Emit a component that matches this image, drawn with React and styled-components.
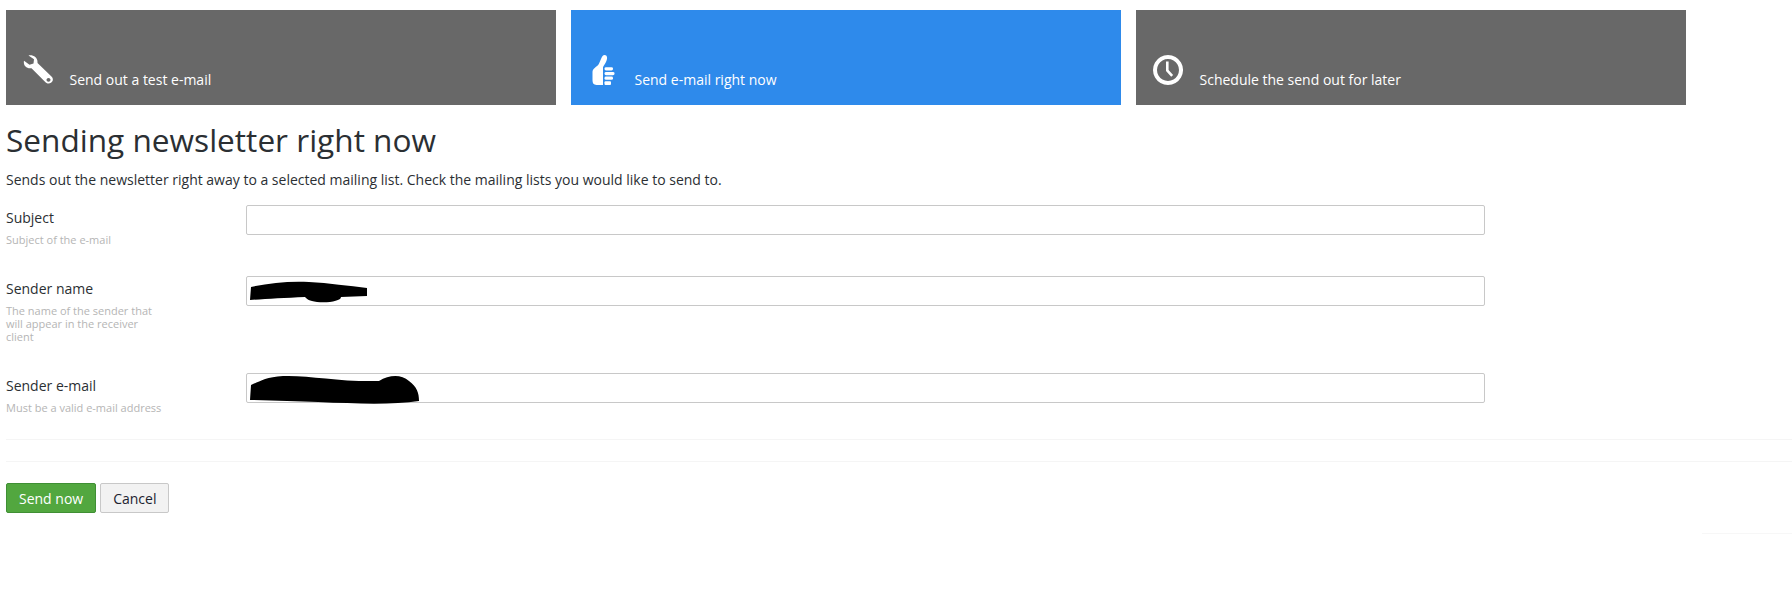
import React from 'react'
import styled, { createGlobalStyle } from 'styled-components'

const GlobalStyle = createGlobalStyle`
    html, body {
        margin: 0;
        background: #fff;
        font-family: 'Open Sans', sans-serif;
        font-size: 14px;
        color: #2b2f33;
    }
`

const Page = styled.div`
    position: relative;
    height: 591px;
    padding: 10px 0 0 6px;
    box-sizing: border-box;
    overflow: hidden;
`

const Tiles = styled.div`
    display: flex;
    gap: 15px;
`

const Tile = styled.a`
    width: 550px;
    height: 95px;
    box-sizing: border-box;
    padding: 0 0 16px 17px;
    display: flex;
    align-items: flex-end;
    background: ${p => (p.$active ? '#2e8aeb' : '#686868')};
    color: #fff;
    font-size: 14px;
    line-height: 19px;
`

const TileIcon = styled.svg`
    width: 30px;
    height: 30px;
    margin: 0 16.5px 4px 0;
    flex: none;
    fill: #fff;
`

const Title = styled.h1`
    margin: 13px 0 0;
    font-size: 31.6px;
    font-weight: 400;
    line-height: 44px;
    color: #2b2f33;
`

const Intro = styled.p`
    margin: 8px 0 0;
    line-height: 19px;
`

const Form = styled.div`
    margin-top: 16px;
`

const Row = styled.div`
    display: grid;
    grid-template-columns: 240px 1239px;
    min-height: ${p => p.$height}px;
`

const Label = styled.div`
    padding-top: 3px;
    line-height: 19px;
    color: #2b2f33;
`

const Help = styled.div`
    width: 158px;
    margin-top: 6px;
    font-size: 11px;
    line-height: 13px;
    color: #b5b5b5;
`

const Field = styled.div`
    position: relative;
`

const Input = styled.input`
    display: block;
    width: 100%;
    height: 30px;
    box-sizing: border-box;
    border: 1px solid #c8c8c8;
    border-radius: 2px;
    background: #fff;
    outline: none;
`

const Scribble = styled.svg`
    position: absolute;
    left: 3px;
    top: 2px;
    height: 32px;
    width: ${p => p.$width}px;
    fill: #000;
`

const Divider = styled.hr`
    margin: 0 0 21px;
    border: 0;
    border-top: 1px solid #f5f5f5;
`

const Buttons = styled.div`
    display: flex;
    gap: 4px;
    margin-top: 21px;
`

const Button = styled.button`
    height: 30px;
    box-sizing: border-box;
    padding: 0 12px;
    border: 1px solid ${p => (p.$primary ? '#3f8f34' : '#c8c8c8')};
    border-radius: 2px;
    background: ${p => (p.$primary ? '#52a73f' : '#f2f2f2')};
    color: ${p => (p.$primary ? '#fff' : '#1c2330')};
    font-family: 'Open Sans', sans-serif;
    font-size: 14px;
`

const StrayLine = styled.div`
    position: absolute;
    right: 0;
    top: 533px;
    width: 90px;
    border-top: 1px solid #f7f7f7;
`

const Wrench = () => (
    <TileIcon viewBox="0 0 30 32" preserveAspectRatio="none">
        <path d="M1 6 L6.5 10.5 L10.5 9 L11 4.5 L5.5 0.5 C10 -0.5 15 2.5 14.5 8.5 L29 23.5 C30.5 25.5 30 28 28 29.5 C26 31 23.5 30.5 22 28.5 L8.5 14 C3.5 15 0 11 1 6 Z M25.5 24.5 a2 2 0 1 0 0.01 0 Z" fillRule="evenodd" />
    </TileIcon>
)

const Thumb = () => (
    <TileIcon viewBox="-2.5 0 30 32" preserveAspectRatio="none">
        <path d="M14 0 C17 0 17 4 16 6 C15 9 13 11 12.500 13 L12.500 32 L6 32 C3 32 2 30 2 27 L2 18 C2 14 6 13 8 10 C10 7 11 0 14 0 Z" />
        <rect x="14" y="13" width="8.500" height="3.500" rx="1.500" />
        <rect x="14" y="18" width="10" height="3.500" rx="1.500" />
        <rect x="14" y="23" width="8.500" height="3.500" rx="1.500" />
        <rect x="14" y="28" width="6.500" height="4" rx="1" />
    </TileIcon>
)

const Clock = () => (
    <TileIcon viewBox="0 0 30 30">
        <path fillRule="evenodd" d="M15 0 a15 15 0 1 0 0.01 0 Z M15 4 a11 11 0 1 1 -0.01 0 Z" />
        <path d="M13 6.500 h2.600 v8.500 l4.500 5 -1.900 1.800 -5.200 -5.700 Z" />
    </TileIcon>
)

const rows = [
    { label: 'Subject', help: 'Subject of the e-mail', height: 71 },
    { label: 'Sender name', help: 'The name of the sender that will appear in the receiver client', height: 97, scribble: 'name' },
    { label: 'Sender e-mail', help: 'Must be a valid e-mail address', height: 66, scribble: 'email' },
]

const scribbles = {
    name: (
        <Scribble $width={118} viewBox="0 0 118 32">
            <path d="M2 9 C20 5 40 3 60 4 C80 5 100 8 118 10 L118 18 L92 19 C92 23 80 25 68 24 C60 23 58 21 56 19 C35 20 15 21 1 22 Z" />
        </Scribble>
    ),
    email: (
        <Scribble $width={172} viewBox="0 0 172 32">
            <path d="M2 10 C10 7 16 2 34 1 C60 0 90 7 130 6 C140 0 152 -1 160 6 C168 12 170 18 170 26 C130 32 70 26 1 25 Z" />
        </Scribble>
    ),
}

export default function App() {
    return (
        <Page>
            <GlobalStyle />
            <Tiles>
                <Tile><Wrench />Send out a test e-mail</Tile>
                <Tile $active><Thumb />Send e-mail right now</Tile>
                <Tile><Clock />Schedule the send out for later</Tile>
            </Tiles>
            <Title>Sending newsletter right now</Title>
            <Intro>Sends out the newsletter right away to a selected mailing list. Check the mailing lists you would like to send to.</Intro>
            <Form>
                {rows.map(r => (
                    <Row key={r.label} $height={r.height}>
                        <div>
                            <Label>{r.label}</Label>
                            <Help>{r.help}</Help>
                        </div>
                        <Field>
                            <Input />
                            {r.scribble && scribbles[r.scribble]}
                        </Field>
                    </Row>
                ))}
            </Form>
            <Divider />
            <Divider />
            <Buttons>
                <Button $primary>Send now</Button>
                <Button>Cancel</Button>
            </Buttons>
            <StrayLine />
        </Page>
    )
}
